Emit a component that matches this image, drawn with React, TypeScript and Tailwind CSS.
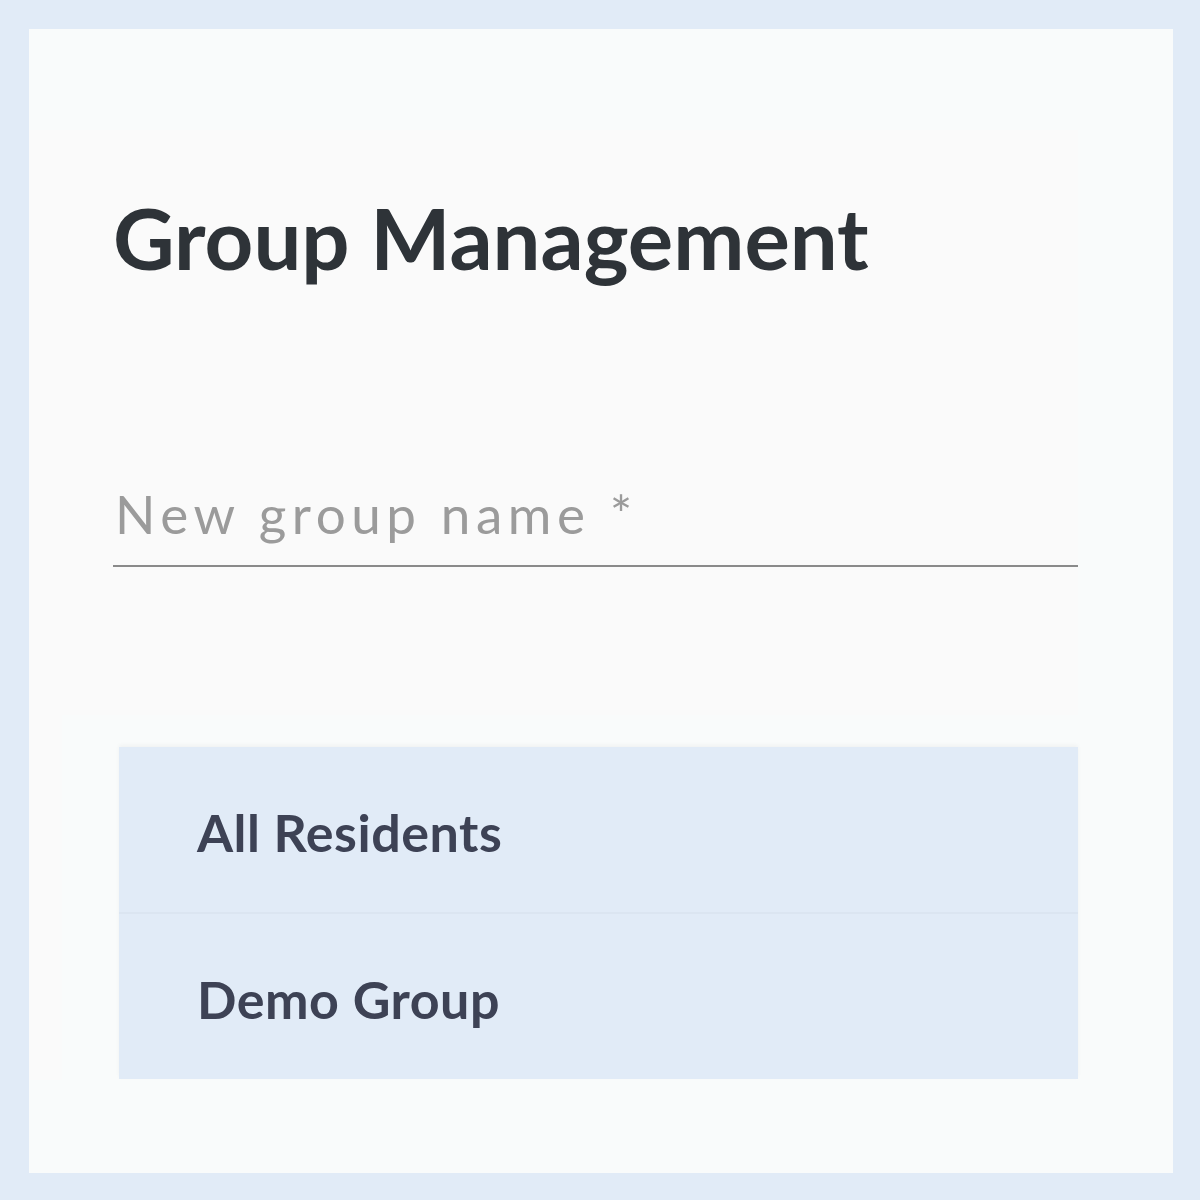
export default function App() {
  const groups = ["All Residents", "Demo Group"];

  return (
    <div className="h-[1200px] w-[1200px] bg-[#e1ebf7] pt-[29px] pl-[29px] pr-[27px] pb-[27px] font-['Lato',sans-serif]">
      <div className="flex h-full flex-col bg-[#f9fbfb] pt-[101px]">
        {/* Header + input */}
        <div className="mr-[95px] h-[585px] bg-[#fafafa] pl-[84px] pt-[65px]">
          <h1 className="text-[85px] leading-none font-bold text-[#2e3338]">Group Management</h1>
          <div className="mt-[207px] border-b-2 border-[#8a8a8a] pb-[25px] pl-[2px]">
            <span className="text-[53px] leading-none tracking-[0.105em] text-[#9b9b9b]">
              New group name *
            </span>
          </div>
        </div>

        {/* Group list */}
        <div className="flex">
          <div className="h-[365px] w-[33px] bg-[#fafafa]" />
          <div className="flex-1 pl-[57px] pr-[95px] pt-[32px]">
            <div className="bg-[#e1ebf7] shadow-[0_-2px_4px_rgba(0,0,0,0.04)]">
              {groups.map((g, i) => (
                <div
                  key={g}
                  className={
                    "pl-[78px] pt-[59px] pb-[54px] " +
                    (i > 0 ? "border-t-2 border-[#dbe5f1]" : "")
                  }
                >
                  <span className="text-[52px] leading-none font-bold tracking-[0.01em] text-[#3d4255]">{g}</span>
                </div>
              ))}
            </div>
          </div>
        </div>
      </div>
    </div>
  );
}
